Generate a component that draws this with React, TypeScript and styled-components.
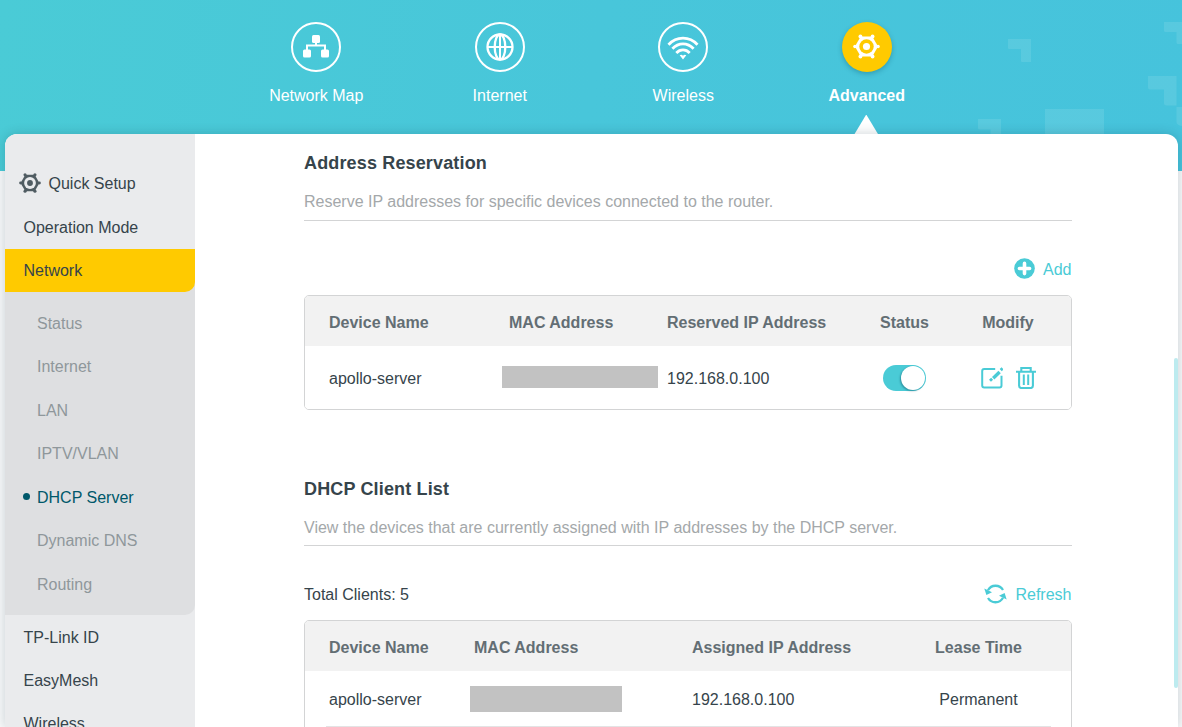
import React from 'react';
import styled, { createGlobalStyle } from 'styled-components';

const TEAL = '#4acbd6';
const INK = '#36444b';

const GlobalStyle = createGlobalStyle`
  *, *::before, *::after { box-sizing: border-box; }
  body {
    margin: 0;
    overflow: hidden;
    font-family: "Liberation Sans", Arial, sans-serif;
    font-size: 16px;
    line-height: 20px;
    color: ${INK};
  }
  h2, p { margin: 0; }
  svg { display: block; flex: none; }
`;

const Page = styled.div`
  position: relative;
  display: flex;
  flex-direction: column;
  height: 727px;
  overflow: hidden;
  background: linear-gradient(100deg, #4acbd6 0%, #48c6da 50%, #46c3dc 100%) 0 0 / 100% 171px no-repeat #f8f9fa;
`;

const Decoration = styled.svg`
  position: absolute;
  top: 0;
  right: 0;
`;

const TopNav = styled.nav`
  display: grid;
  grid-template-columns: repeat(4, 183.5px);
  flex: none;
  height: 134px;
  padding: 21.5px 0 0 224.5px;
`;

const TopItem = styled.a<{ $active?: boolean }>`
  display: flex;
  flex-direction: column;
  align-items: center;
  gap: 14px;
  color: #fff;
  font-weight: ${p => (p.$active ? 700 : 400)};
`;

const TopIcon = styled.span<{ $active?: boolean }>`
  display: flex;
  align-items: center;
  justify-content: center;
  width: 50px;
  height: 50px;
  border-radius: 50%;
  border: ${p => (p.$active ? '0' : '2px solid #fff')};
  background: ${p => (p.$active ? '#ffca00' : 'transparent')};
  box-shadow: ${p => (p.$active ? '0 2px 5px rgba(0, 70, 90, 0.3)' : 'none')};
`;

const Pointer = styled.span`
  width: 24px;
  height: 20px;
  margin: -5px 1px 0 0;
  background: #fff;
  clip-path: polygon(50% 0, 100% 100%, 0 100%);
`;

const Panel = styled.div`
  position: relative;
  display: flex;
  flex: 1;
  min-height: 0;
  margin: 0 4px 0 5px;
  background: #fff;
  border-radius: 12px 12px 0 0;
  box-shadow: 0 0 12px rgba(0, 40, 55, 0.2);
  clip-path: inset(-12px -4px 0 -5px);
`;

const Sidebar = styled.aside`
  flex: none;
  width: 190px;
  padding-top: 28px;
  overflow: hidden;
  background: #eaebed;
  border-radius: 12px 0 0 0;
`;

const MenuItem = styled.a<{ $active?: boolean; $withIcon?: boolean }>`
  display: flex;
  align-items: center;
  gap: 8px;
  height: 43.4px;
  padding: ${p => (p.$withIcon ? '0 0 0 18.5px' : '1.4px 0 0 18.5px')};
  background: ${p => (p.$active ? '#ffca00' : 'transparent')};
  border-radius: 0 0 ${p => (p.$active ? '10px' : '0')} 0;
  svg { margin: 0 0 2px -5px; }
`;

const Submenu = styled.div`
  padding: 9px 0 9.5px;
  background: #dedfe1;
  border-radius: 0 0 10px 0;
`;

const ActiveGroup = styled.div`
  background: linear-gradient(#dedfe1, #dedfe1) 0 0 / 100% 60px no-repeat;
`;

const SubItem = styled.a<{ $active?: boolean }>`
  display: flex;
  align-items: center;
  height: 43.5px;
  padding: 2px 0 0 18px;
  color: ${p => (p.$active ? '#00586a' : '#8f979b')};
  &::before {
    content: '';
    width: 7px;
    height: 7px;
    margin: 0 7px 2px 0;
    border-radius: 50%;
    background: ${p => (p.$active ? '#00586a' : 'transparent')};
  }
`;

const Content = styled.main`
  flex: none;
  width: 768px;
  margin-left: 109px;
  padding-top: 19px;
`;

const Section = styled.section`
  height: 326px;
`;

const Title = styled.h2`
  font-size: 18px;
  line-height: 20px;
  font-weight: 700;
  letter-spacing: 0.15px;
`;

const Description = styled.p<{ $height: number }>`
  height: ${p => p.$height}px;
  padding-top: 19px;
  color: #a4a8aa;
  border-bottom: 1px solid #d3d4d5;
`;

const ActionBar = styled.div`
  display: flex;
  align-items: center;
  justify-content: space-between;
  height: 74px;
  padding-top: 24px;
`;

const Action = styled.a`
  display: flex;
  align-items: center;
  gap: 8px;
  margin-left: auto;
  padding-right: 0.5px;
  color: ${TEAL};
  svg { margin-bottom: 3px; }
`;

const Table = styled.div<{ $continues?: boolean }>`
  overflow: hidden;
  padding-bottom: ${p => (p.$continues ? 56 : 0)}px;
  border: 1px solid #d3d4d5;
  border-radius: 5px;
`;

const TableRow = styled.div<{ $columns: string; $height: number; $head?: boolean }>`
  display: grid;
  grid-template-columns: ${p => p.$columns};
  align-items: center;
  height: ${p => p.$height}px;
  padding-left: 24px;
  padding-top: ${p => (p.$head ? 2 : 0)}px;
  background: ${p => (p.$head ? '#f2f2f2' : '#fff')};
  color: ${p => (p.$head ? '#636e74' : INK)};
  font-weight: ${p => (p.$head ? 700 : 400)};
`;

const Cell = styled.div<{ $center?: boolean; $indent?: number }>`
  display: flex;
  align-items: center;
  justify-content: ${p => (p.$center ? 'center' : 'flex-start')};
  padding: 2px 0 0 ${p => p.$indent ?? 0}px;
  white-space: nowrap;
`;

const ControlCell = styled.div`
  display: flex;
  align-items: center;
  justify-content: center;
`;

const RedactedCell = styled.div<{ $width: number; $height: number; $lift?: number }>`
  width: ${p => p.$width}px;
  height: ${p => p.$height}px;
  margin-bottom: ${p => p.$lift ?? 0}px;
  background: #c2c2c2;
`;

const RowDivider = styled.div`
  height: 1px;
  margin: 0 20px 0 21px;
  background: #e3e3e4;
`;

const Toggle = styled.span`
  display: flex;
  justify-content: flex-end;
  width: 43px;
  height: 26px;
  padding: 1px;
  border-radius: 13px;
  background: ${TEAL};
`;

const Knob = styled.span`
  width: 24px;
  height: 24px;
  border-radius: 50%;
  background: #fff;
  box-shadow: -1px 1px 2px rgba(0, 60, 80, 0.4);
`;

const IconPair = styled.span`
  display: flex;
  gap: 13px;
`;

const ScrollThumb = styled.div`
  position: absolute;
  right: 0;
  top: 224px;
  width: 4px;
  height: 330px;
  border-radius: 2px;
  background: #bdebef;
`;

const MapIcon = () => (
  <svg width="28" height="26" viewBox="0 0 28 26" fill="#fff">
    <rect x="10" y="1" width="8" height="8" rx="1.5" />
    <rect x="1" y="15.6" width="8" height="8" rx="1.5" />
    <rect x="19" y="15.6" width="8" height="8" rx="1.5" />
    <path d="M14 8v4M5 16v-4.5h18V16" fill="none" stroke="#fff" strokeWidth="2" />
  </svg>
);

const GlobeIcon = () => (
  <svg width="28" height="28" viewBox="0 0 28 28" fill="none" stroke="#fff" strokeWidth="2.3">
    <circle cx="14" cy="14" r="12.5" />
    <path d="M1.5 14h25M14 1.5v25" strokeWidth="2" />
    <ellipse cx="14" cy="14" rx="5.3" ry="12.5" />
  </svg>
);

const WifiIcon = () => (
  <svg width="32" height="26" viewBox="0 0 32 26" fill="none" stroke="#fff" strokeWidth="2.8">
    <path d="M1.5 10.7C9.5 2 22.5 2 30.5 10.7" />
    <path d="M5.4 14.8C11.5 8.2 20.5 8.2 26.6 14.8" />
    <path d="M9.3 18.9C13.2 14.9 18.8 14.9 22.7 18.9" />
    <path d="M12.7 21.3Q14.5 20.2 16 21.8Q17.5 20.2 19.3 21.3L16 25.4Z" fill="#fff" stroke="none" />
  </svg>
);

const GearIcon = ({ size, color, hole }: { size: number; color: string; hole: string }) => (
  <svg width={size} height={size} viewBox="0 0 28 28" fill={color}>
    <path d="M8 3.6L20 3.6L26 14L20 24.4L8 24.4L2 14Z" />
    <circle cx="7.7" cy="3.6" r="2" />
    <circle cx="20.3" cy="3.6" r="2" />
    <circle cx="26" cy="14" r="1.8" />
    <circle cx="20.3" cy="24.4" r="2" />
    <circle cx="7.7" cy="24.4" r="2" />
    <circle cx="2" cy="14" r="1.8" />
    <circle cx="14" cy="14" r="7.5" fill={hole} />
    <circle cx="14" cy="14" r="3.7" />
  </svg>
);

const AddIcon = () => (
  <svg width="21" height="21" viewBox="0 0 21 21">
    <circle cx="10.5" cy="10.5" r="10.3" fill={TEAL} />
    <path d="M10.5 5.4v10.2M5.4 10.5h10.2" stroke="#fff" strokeWidth="3.6" strokeLinecap="round" />
  </svg>
);

const RefreshIcon = () => (
  <svg width="23" height="20" viewBox="0 0 23 20" fill="none" stroke={TEAL} strokeWidth="2.3">
    <path d="M4 6.3A8.6 8.6 0 0 1 19 6" />
    <path d="M19 13.7A8.6 8.6 0 0 1 4 14" />
    <path d="M.3 4.4L2.4 11L8 8.2Z" fill={TEAL} stroke="none" />
    <path d="M22.7 15.6L20.6 9L15 11.8Z" fill={TEAL} stroke="none" />
  </svg>
);

const EditIcon = () => (
  <svg width="22" height="22" viewBox="0 0 22 22" fill="none" stroke={TEAL}>
    <path d="M14.2 2H3.2Q1.2 2 1.2 4V18.5Q1.2 20.5 3.2 20.5H18.5Q20.5 20.5 20.5 18.5V8.8" strokeWidth="2" />
    <path d="M12.2 11.2L18.6 5.1" strokeWidth="3.4" />
    <path d="M19.7 3.1L21.6 1.3" strokeWidth="3" />
    <path d="M9 13.8L11.1 11.8" strokeWidth="2.8" />
  </svg>
);

const TrashIcon = () => (
  <svg width="20" height="22" viewBox="0 0 20 22" fill="none" stroke={TEAL} strokeWidth="2.1">
    <path d="M0 4.7h20M5.3 4.5V1h9.4v3.5" />
    <path d="M3.1 5v13.8q0 2.2 2.2 2.2h9.4q2.2 0 2.2-2.2V5" />
    <path d="M7.8 7.5v10.5M12.2 7.5v10.5" strokeWidth="2" />
  </svg>
);

const RESERVED_COLUMNS = '173px 165px 180px 115px 92px';
const CLIENT_COLUMNS = '141px 222px 214px 145px';
const SUBMENU = ['Status', 'Internet', 'LAN', 'IPTV/VLAN', 'DHCP Server', 'Dynamic DNS', 'Routing'];

export default function App() {
  return (
    <Page>
      <GlobalStyle />
      <Decoration width="252" height="171" viewBox="930 0 252 171" fill="#fff" fillOpacity="0.1">
        <path d="M1008 39h23v23h-9q-1 0-1-1V49h-12q-1 0-1-1z" />
        <path d="M1164 22h18v22h-4q-1.5 0-1.5-1.5V32h-11q-1.5 0-1.5-1.5z" />
        <path d="M1148 76h28.5v29.500h-10q-2.5 0-2.5-2.5V89.500h-14q-2 0-2-2z" />
        <path d="M1176.5 107h5.5v19q-5.5-1-5.5-4z" />
        <path d="M978 119h23v15h-10.5v-4.5H979.5q-1.5 0-1.5-1.5z" />
        <path d="M1045 109h59v30h-59z" />
      </Decoration>
      <TopNav>
        <TopItem><TopIcon><MapIcon /></TopIcon>Network Map</TopItem>
        <TopItem><TopIcon><GlobeIcon /></TopIcon>Internet</TopItem>
        <TopItem><TopIcon><WifiIcon /></TopIcon>Wireless</TopItem>
        <TopItem $active>
          <TopIcon $active><GearIcon size={27} color="#fff" hole="#ffca00" /></TopIcon>
          Advanced
          <Pointer />
        </TopItem>
      </TopNav>
      <Panel>
        <Sidebar>
          <MenuItem $withIcon><GearIcon size={22} color="#505c62" hole="#eaebed" />Quick Setup</MenuItem>
          <MenuItem>Operation Mode</MenuItem>
          <ActiveGroup>
            <MenuItem $active>Network</MenuItem>
            <Submenu>
              {SUBMENU.map(label => (
                <SubItem key={label} $active={label === 'DHCP Server'}>{label}</SubItem>
              ))}
            </Submenu>
          </ActiveGroup>
          <MenuItem>TP-Link ID</MenuItem>
          <MenuItem>EasyMesh</MenuItem>
          <MenuItem>Wireless</MenuItem>
        </Sidebar>
        <Content>
          <Section>
            <Title>Address Reservation</Title>
            <Description $height={48}>Reserve IP addresses for specific devices connected to the router.</Description>
            <ActionBar>
              <Action><AddIcon />Add</Action>
            </ActionBar>
            <Table>
              <TableRow $head $columns={RESERVED_COLUMNS} $height={50}>
                <Cell>Device Name</Cell>
                <Cell $indent={7}>MAC Address</Cell>
                <Cell>Reserved IP Address</Cell>
                <Cell $center>Status</Cell>
                <Cell $center>Modify</Cell>
              </TableRow>
              <TableRow $columns={RESERVED_COLUMNS} $height={63}>
                <Cell>apollo-server</Cell>
                <RedactedCell $width={156} $height={22} $lift={1} />
                <Cell>192.168.0.100</Cell>
                <ControlCell><Toggle><Knob /></Toggle></ControlCell>
                <ControlCell><IconPair><EditIcon /><TrashIcon /></IconPair></ControlCell>
              </TableRow>
            </Table>
          </Section>
          <Section>
            <Title>DHCP Client List</Title>
            <Description $height={47}>View the devices that are currently assigned with IP addresses by the DHCP server.</Description>
            <ActionBar>
              Total Clients: 5
              <Action><RefreshIcon />Refresh</Action>
            </ActionBar>
            <Table $continues>
              <TableRow $head $columns={CLIENT_COLUMNS} $height={50}>
                <Cell>Device Name</Cell>
                <Cell $indent={4}>MAC Address</Cell>
                <Cell>Assigned IP Address</Cell>
                <Cell $center>Lease Time</Cell>
              </TableRow>
              <TableRow $columns={CLIENT_COLUMNS} $height={55}>
                <Cell>apollo-server</Cell>
                <RedactedCell $width={152} $height={26} />
                <Cell>192.168.0.100</Cell>
                <Cell $center>Permanent</Cell>
              </TableRow>
              <RowDivider />
            </Table>
          </Section>
        </Content>
        <ScrollThumb />
      </Panel>
    </Page>
  );
}
